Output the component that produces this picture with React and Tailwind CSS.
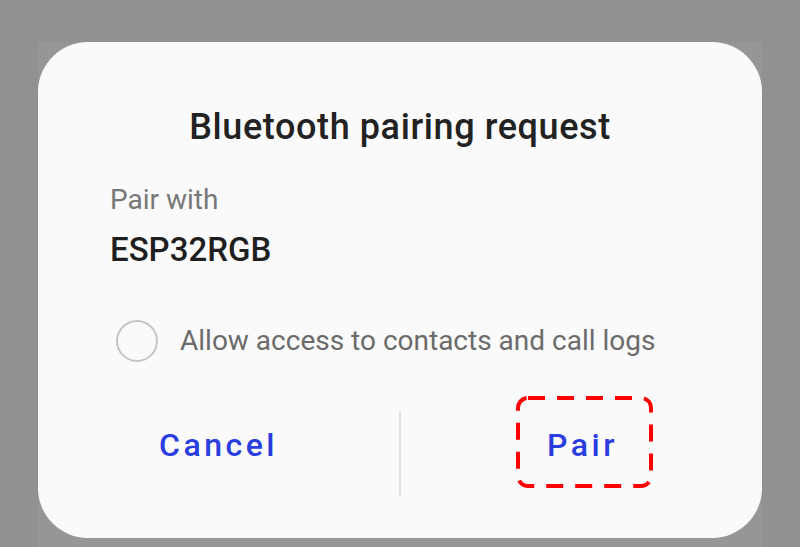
export default function App() {
    return (
        <div className="w-[800px] h-[547px] bg-[#919191] overflow-hidden relative" style={{ fontFamily: 'Roboto, "Noto Sans", sans-serif' }}>
            <div className="absolute left-[38px] top-[42px] w-[724px] h-[520px] bg-[#969696]" />
            <div className="relative ml-[38px] mt-[42px] w-[724px] h-[496px] bg-[#fafafa] rounded-[50px] flex flex-col">
                <h1 className="mt-[61px] text-center text-[36px] leading-[48px] font-medium tracking-[0.6px] text-[#222222]">
                    Bluetooth pairing request
                </h1>
                <div className="pl-[72px] mt-[31px]">
                    <p className="text-[28px] leading-[36px] text-[#777777]">Pair with</p>
                    <p className="mt-[11px] text-[33px] leading-[42px] font-medium text-[#1f1f1f]">ESP32RGB</p>
                </div>
                <div className="flex items-center pl-[78px] mt-[49px]">
                    <div className="w-[42px] h-[42px] rounded-full border-2 border-[#c4c4c4]" />
                    <span className="ml-[22px] text-[28px] leading-[42px] text-[#6b6b6b]">
                        Allow access to contacts and call logs
                    </span>
                </div>
                <div className="flex items-center mt-[50px] h-[84px]">
                    <div className="flex-1 flex justify-center">
                        <span className="mb-[18px] text-[32px] leading-[42px] font-medium tracking-[3.5px] text-[#2a3ee0]">Cancel</span>
                    </div>
                    <div className="w-[2px] h-[84px] bg-[#e0e0e0]" />
                    <div className="flex-1 flex justify-center">
                        <div className="relative ml-[6px] w-[137px] h-[92px] -mt-[25px] pt-[7px] pr-[4px] flex items-center justify-center">
                            <span className="text-[32px] leading-[42px] font-medium tracking-[3.5px] text-[#2a3ee0]">Pair</span>
                            <svg className="absolute inset-0" width="137" height="92" viewBox="0 0 137 92">
                                <rect x="2" y="2" width="133" height="88" rx="10" fill="none" stroke="#ff0000" strokeWidth="4" strokeDasharray="17 12" />
                            </svg>
                        </div>
                    </div>
                </div>
            </div>
        </div>
    );
}
